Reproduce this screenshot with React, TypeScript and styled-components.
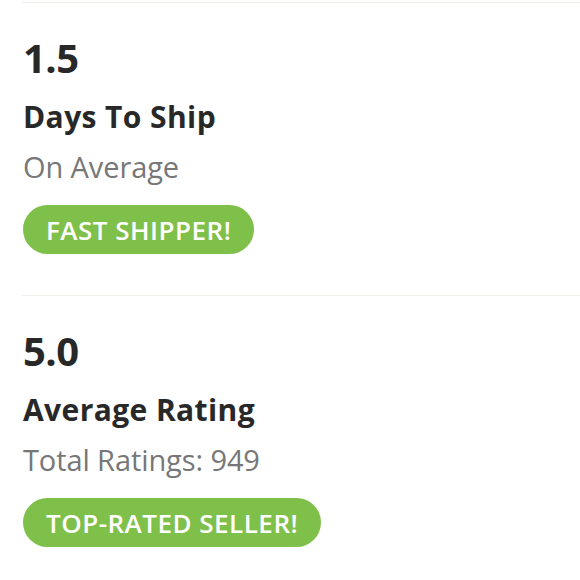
import styled, { createGlobalStyle } from 'styled-components'

const GlobalStyle = createGlobalStyle`
  body {
    margin: 0;
    background: #ffffff;
    font-family: "Open Sans", Lato, sans-serif;
  }
`

const stats = [
  { value: '1.5', label: 'Days To Ship', caption: 'On Average', badge: 'FAST SHIPPER!' },
  { value: '5.0', label: 'Average Rating', caption: 'Total Ratings: 949', badge: 'TOP-RATED SELLER!' },
]

function App() {
  return (
    <>
      <GlobalStyle />
      <Page>
        {stats.map((s) => (
          <Stat key={s.value}>
            <Value>{s.value}</Value>
            <Label>{s.label}</Label>
            <Caption>{s.caption}</Caption>
            <Badge>{s.badge}</Badge>
          </Stat>
        ))}
      </Page>
    </>
  )
}

export default App

const Page = styled.div`
  padding: 2px 0 0 22px;
  display: flex;
  flex-direction: column;
`

const Stat = styled.section`
  border-top: 1px solid #efeee9;
  padding: 31px 0 41px 1px;
  display: flex;
  flex-direction: column;
  align-items: flex-start;
`

const Value = styled.div`
  font-size: 40px;
  line-height: 48px;
  font-weight: 700;
  color: #282828;
  letter-spacing: -0.5px;
`

const Label = styled.div`
  margin-top: 17px;
  font-size: 30px;
  line-height: 36px;
  font-weight: 700;
  color: #282828;
  letter-spacing: 0.4px;
`

const Caption = styled.div`
  margin-top: 14px;
  font-size: 29px;
  line-height: 36px;
  font-weight: 400;
  color: #777777;
  letter-spacing: -0.1px;
`

const Badge = styled.div`
  margin-top: 20px;
  height: 49px;
  padding: 0 23px;
  border-radius: 25px;
  background: #7fc04b;
  color: #ffffff;
  font-size: 26px;
  font-weight: 600;
  letter-spacing: 0.5px;
  display: flex;
  align-items: center;
`
